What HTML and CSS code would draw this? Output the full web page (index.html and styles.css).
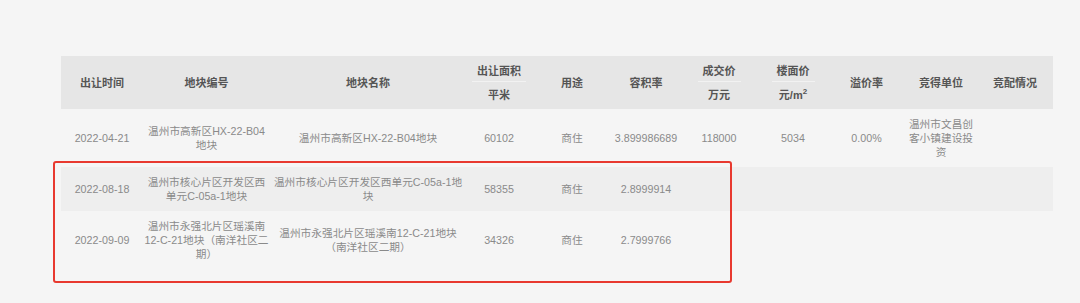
FILE: index.html
```html
<!DOCTYPE html>
<html lang="zh-CN">
<head>
<meta charset="utf-8">
<link rel="stylesheet" href="styles.css">
</head>
<body>
<div class="page">
  <table class="land">
    <colgroup>
      <col class="c1"><col class="c2"><col class="c3"><col class="c4"><col class="c5"><col class="c6"><col class="c7"><col class="c8"><col class="c9"><col class="c10"><col class="c11">
    </colgroup>
    <thead>
      <tr>
        <th>出让时间</th>
        <th>地块编号</th>
        <th>地块名称</th>
        <th><span class="top">出让面积</span><span class="unit">平米</span></th>
        <th>用途</th>
        <th>容积率</th>
        <th><span class="top">成交价</span><span class="unit">万元</span></th>
        <th><span class="top">楼面价</span><span class="unit">元/m<sup>2</sup></span></th>
        <th>溢价率</th>
        <th>竞得单位</th>
        <th>竞配情况</th>
      </tr>
    </thead>
    <tbody>
      <tr>
        <td>2022-04-21</td>
        <td class="code">温州市高新区HX-22-B04地块</td>
        <td>温州市高新区HX-22-B04地块</td>
        <td>60102</td>
        <td>商住</td>
        <td>3.899986689</td>
        <td>118000</td>
        <td>5034</td>
        <td>0.00%</td>
        <td>温州市文昌创客小镇建设投资</td>
        <td></td>
      </tr>
      <tr class="alt">
        <td>2022-08-18</td>
        <td class="code">温州市核心片区开发区西单元C-05a-1地块</td>
        <td>温州市核心片区开发区西单元C-05a-1地块</td>
        <td>58355</td>
        <td>商住</td>
        <td>2.8999914</td>
        <td></td>
        <td></td>
        <td></td>
        <td></td>
        <td></td>
      </tr>
      <tr>
        <td>2022-09-09</td>
        <td class="code">温州市永强北片区瑶溪南12-C-21地块（南洋社区二期）</td>
        <td>温州市永强北片区瑶溪南12-C-21地块（南洋社区二期）</td>
        <td>34326</td>
        <td>商住</td>
        <td>2.7999766</td>
        <td></td>
        <td></td>
        <td></td>
        <td></td>
        <td></td>
      </tr>
    </tbody>
  </table>
  <div class="mark"></div>
</div>
</body>
</html>
```
FILE: styles.css
```css
html, body {
  margin: 0;
  padding: 0;
  background: #f5f5f5;
}
.page {
  position: relative;
  width: 1080px;
  height: 303px;
  padding: 56px 0 0 61px;
  box-sizing: border-box;
  font-family: "Liberation Sans", "Noto Sans CJK SC", sans-serif;
}
.land {
  border-collapse: collapse;
  border-spacing: 0;
  table-layout: fixed;
  width: 992px;
}
.c1 { width: 82px; }
.c2 { width: 127px; }
.c3 { width: 196px; }
.c4 { width: 66px; }
.c5 { width: 80px; }
.c6 { width: 68px; }
.c7 { width: 78px; }
.c8 { width: 70px; }
.c9 { width: 77px; }
.c10 { width: 72px; }
.c11 { width: 76px; }

.land th {
  background: #e6e6e6;
  color: #555;
  font-size: 11px;
  font-weight: 700;
  line-height: 14px;
  height: 53px;
  padding: 0;
  text-align: center;
  vertical-align: middle;
}
.land th .top {
  display: inline-block;
  padding: 0 5px 3px;
  border-bottom: 1px solid #f2f2f2;
}
.land th .unit {
  display: block;
  padding-top: 6px;
}
.land th sup {
  font-size: 8px;
  line-height: 0;
  vertical-align: 5px;
}
.land td {
  color: #8a8a8a;
  font-size: 10.7px;
  line-height: 14px;
  padding: 8px 2px;
  text-align: center;
  vertical-align: middle;
  overflow-wrap: anywhere;
}
.land td.code {
  padding: 8px 1px;
}
.land tr.alt td {
  background: #eeeeee;
}
.mark {
  position: absolute;
  left: 53px;
  top: 161px;
  width: 679px;
  height: 122px;
  box-sizing: border-box;
  border: 2px solid #e8392f;
  border-radius: 3px;
}
```
